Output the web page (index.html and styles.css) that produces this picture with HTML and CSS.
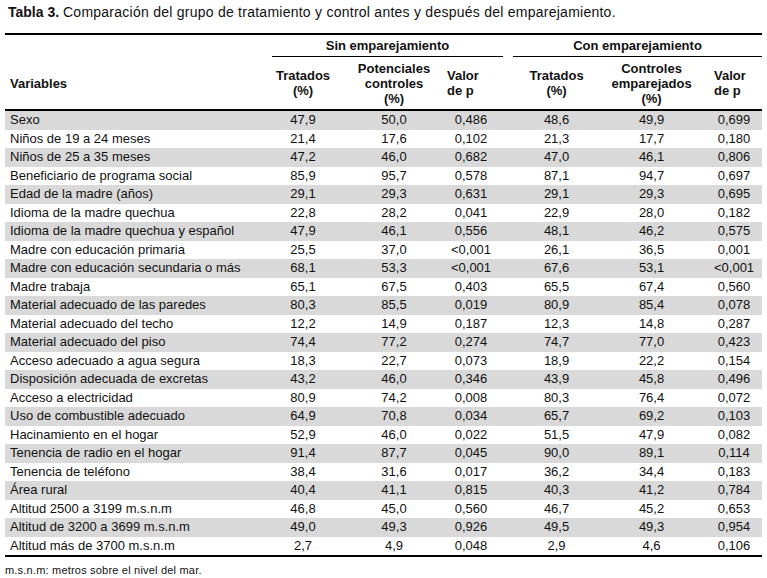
FILE: index.html
```html
<!DOCTYPE html>
<html lang="es">
<head>
<meta charset="utf-8">
<title>Tabla 3</title>
<link rel="stylesheet" href="styles.css">
</head>
<body>
<p class="title"><b>Tabla 3.</b> <span class="title-text">Comparación del grupo de tratamiento y control antes y después del emparejamiento.</span></p>
<table class="data">
  <colgroup>
    <col class="c-var"><col class="c-t1"><col class="c-p1"><col class="c-v1"><col class="c-gap"><col class="c-t2"><col class="c-c2"><col class="c-v2">
  </colgroup>
  <thead>
    <tr class="h1">
      <th></th>
      <th colspan="3" class="grp">Sin emparejamiento</th>
      <th></th>
      <th colspan="3" class="grp">Con emparejamiento</th>
    </tr>
    <tr class="h2">
      <th class="var">Variables</th>
      <th>Tratados<br>(%)</th>
      <th class="p1">Potenciales<br>controles<br>(%)</th>
      <th class="vh">Valor<br>de p</th>
      <th></th>
      <th>Tratados<br>(%)</th>
      <th>Controles<br>emparejados<br>(%)</th>
      <th class="vh vh2">Valor<br>de p</th>
    </tr>
  </thead>
  <tbody>
    <tr><td>Sexo</td><td>47,9</td><td>50,0</td><td>0,486</td><td></td><td>48,6</td><td>49,9</td><td>0,699</td></tr>
    <tr><td>Niños de 19 a 24 meses</td><td>21,4</td><td>17,6</td><td>0,102</td><td></td><td>21,3</td><td>17,7</td><td>0,180</td></tr>
    <tr><td>Niños de 25 a 35 meses</td><td>47,2</td><td>46,0</td><td>0,682</td><td></td><td>47,0</td><td>46,1</td><td>0,806</td></tr>
    <tr><td>Beneficiario de programa social</td><td>85,9</td><td>95,7</td><td>0,578</td><td></td><td>87,1</td><td>94,7</td><td>0,697</td></tr>
    <tr><td>Edad de la madre (años)</td><td>29,1</td><td>29,3</td><td>0,631</td><td></td><td>29,1</td><td>29,3</td><td>0,695</td></tr>
    <tr><td>Idioma de la madre quechua</td><td>22,8</td><td>28,2</td><td>0,041</td><td></td><td>22,9</td><td>28,0</td><td>0,182</td></tr>
    <tr><td>Idioma de la madre quechua y español</td><td>47,9</td><td>46,1</td><td>0,556</td><td></td><td>48,1</td><td>46,2</td><td>0,575</td></tr>
    <tr><td>Madre con educación primaria</td><td>25,5</td><td>37,0</td><td>&lt;0,001</td><td></td><td>26,1</td><td>36,5</td><td>0,001</td></tr>
    <tr><td>Madre con educación secundaria o más</td><td>68,1</td><td>53,3</td><td>&lt;0,001</td><td></td><td>67,6</td><td>53,1</td><td>&lt;0,001</td></tr>
    <tr><td>Madre trabaja</td><td>65,1</td><td>67,5</td><td>0,403</td><td></td><td>65,5</td><td>67,4</td><td>0,560</td></tr>
    <tr><td>Material adecuado de las paredes</td><td>80,3</td><td>85,5</td><td>0,019</td><td></td><td>80,9</td><td>85,4</td><td>0,078</td></tr>
    <tr><td>Material adecuado del techo</td><td>12,2</td><td>14,9</td><td>0,187</td><td></td><td>12,3</td><td>14,8</td><td>0,287</td></tr>
    <tr><td>Material adecuado del piso</td><td>74,4</td><td>77,2</td><td>0,274</td><td></td><td>74,7</td><td>77,0</td><td>0,423</td></tr>
    <tr><td>Acceso adecuado a agua segura</td><td>18,3</td><td>22,7</td><td>0,073</td><td></td><td>18,9</td><td>22,2</td><td>0,154</td></tr>
    <tr><td>Disposición adecuada de excretas</td><td>43,2</td><td>46,0</td><td>0,346</td><td></td><td>43,9</td><td>45,8</td><td>0,496</td></tr>
    <tr><td>Acceso a electricidad</td><td>80,9</td><td>74,2</td><td>0,008</td><td></td><td>80,3</td><td>76,4</td><td>0,072</td></tr>
    <tr><td>Uso de combustible adecuado</td><td>64,9</td><td>70,8</td><td>0,034</td><td></td><td>65,7</td><td>69,2</td><td>0,103</td></tr>
    <tr><td>Hacinamiento en el hogar</td><td>52,9</td><td>46,0</td><td>0,022</td><td></td><td>51,5</td><td>47,9</td><td>0,082</td></tr>
    <tr><td>Tenencia de radio en el hogar</td><td>91,4</td><td>87,7</td><td>0,045</td><td></td><td>90,0</td><td>89,1</td><td>0,114</td></tr>
    <tr><td>Tenencia de teléfono</td><td>38,4</td><td>31,6</td><td>0,017</td><td></td><td>36,2</td><td>34,4</td><td>0,183</td></tr>
    <tr><td>Área rural</td><td>40,4</td><td>41,1</td><td>0,815</td><td></td><td>40,3</td><td>41,2</td><td>0,784</td></tr>
    <tr><td>Altitud 2500 a 3199 m.s.n.m</td><td>46,8</td><td>45,0</td><td>0,560</td><td></td><td>46,7</td><td>45,2</td><td>0,653</td></tr>
    <tr><td>Altitud de 3200 a 3699 m.s.n.m</td><td>49,0</td><td>49,3</td><td>0,926</td><td></td><td>49,5</td><td>49,3</td><td>0,954</td></tr>
    <tr><td>Altitud más de 3700 m.s.n.m</td><td>2,7</td><td>4,9</td><td>0,048</td><td></td><td>2,9</td><td>4,6</td><td>0,106</td></tr>
  </tbody>
</table>
<p class="note">m.s.n.m: metros sobre el nivel del mar.</p>
</body>
</html>
```
FILE: styles.css
```css
html, body {
  margin: 0;
  padding: 0;
  background: #fff;
}
body {
  font-family: "Liberation Sans", Arial, sans-serif;
  color: #111;
}
.title {
  margin: 0;
  padding: 4px 0 0 8px;
  font-size: 14px;
  line-height: 16px;
  white-space: nowrap;
}
.title b {
  font-weight: bold;
}
.title-text {
  letter-spacing: 0.25px;
}
.data {
  margin: 13px 0 0 5px;
  width: 757px;
  table-layout: fixed;
  border-collapse: separate;
  border-spacing: 0;
  font-size: 13px;
}
.c-var { width: 267px; }
.c-t1 { width: 62px; }
.c-p1 { width: 113px; }
.c-v1 { width: 56px; }
.c-gap { width: 10px; }
.c-t2 { width: 87px; }
.c-c2 { width: 103px; }
.c-v2 { width: 59px; }

.data th {
  font-weight: bold;
  padding: 0;
  text-align: center;
}
.h1 th {
  border-top: 2px solid #000;
  height: 21px;
  line-height: 21px;
  vertical-align: middle;
}
.h1 th.grp {
  border-bottom: 1px solid #000;
}
.h1 th:not(.grp) {
  border-bottom: 1px solid transparent;
}
.h2 th {
  height: 52px;
  line-height: 15px;
  vertical-align: middle;
  border-bottom: 2px solid #000;
}
.h2 th.var {
  text-align: left;
  padding-left: 5px;
}
.h2 th.p1 {
  padding-left: 7px;
}
.h2 th.vh {
  text-align: left;
}
.h2 th.vh2 {
  padding-left: 11px;
}
.data td {
  padding: 0;
  height: 18.5px;
  line-height: 18px;
  text-align: center;
  white-space: nowrap;
}
.data td:first-child {
  text-align: left;
  padding-left: 5px;
}
.data td:nth-child(3) {
  padding-left: 7px;
}
.data td:nth-child(4) {
  padding-right: 8px;
}
.data td:nth-child(8) {
  padding-left: 3px;
}
.data tbody tr:nth-child(odd) td {
  background: #d9d9d9;
}
.data tbody tr:last-child td {
  border-bottom: 2px solid #000;
}
.note {
  margin: 7px 0 0 5px;
  font-size: 11px;
  line-height: 12px;
  letter-spacing: 0.2px;
}
```
